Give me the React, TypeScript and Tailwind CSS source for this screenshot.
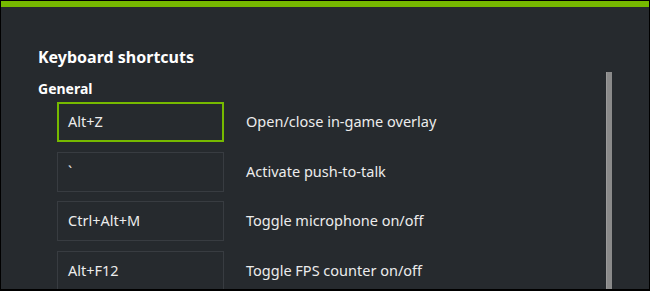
const shortcuts = [
  { keys: 'Alt+Z', label: 'Open/close in-game overlay', active: true },
  { keys: '`', label: 'Activate push-to-talk' },
  { keys: 'Ctrl+Alt+M', label: 'Toggle microphone on/off' },
  { keys: 'Alt+F12', label: 'Toggle FPS counter on/off' },
];

export default function App() {
  return (
    <div className="w-[650px] h-[291px] bg-black pt-px pl-px pr-px pb-[2px] overflow-hidden">
      <div
        className="relative h-full bg-[#262a2e] text-[#ececec] overflow-hidden"
        style={{ fontFamily: '"Noto Sans", "Open Sans", sans-serif' }}
      >
        {/* barra verde */}
        <div className="h-[6px] bg-[#76b900]" />

        <div className="pl-[37px] pt-[40px]">
          <h2 className="text-[16px] leading-[20px] font-bold text-white">Keyboard shortcuts</h2>
          <h3 className="mt-[12.5px] text-[14px] leading-[18px] font-bold text-white">General</h3>

          <div className="mt-[4.5px] ml-[19px] flex flex-col gap-[9.5px]">
            {shortcuts.map((s) => (
              <div key={s.keys} className="flex items-center text-[14.5px]">
                <div
                  className={
                    s.active
                      ? 'w-[167px] h-[40px] border-2 border-[#76b900] pl-[9px] flex items-center'
                      : 'w-[167px] h-[40px] border border-[#383c41] pl-[10px] flex items-center'
                  }
                >
                  {s.keys}
                </div>
                <span className="ml-[22px]">{s.label}</span>
              </div>
            ))}
          </div>
        </div>

        {/* scrollbar */}
        <div className="absolute left-[605px] top-[71px] bottom-0 w-[6px] bg-[#8a8a8a] border-l border-[#9a9a9a]" />
      </div>
    </div>
  );
}
